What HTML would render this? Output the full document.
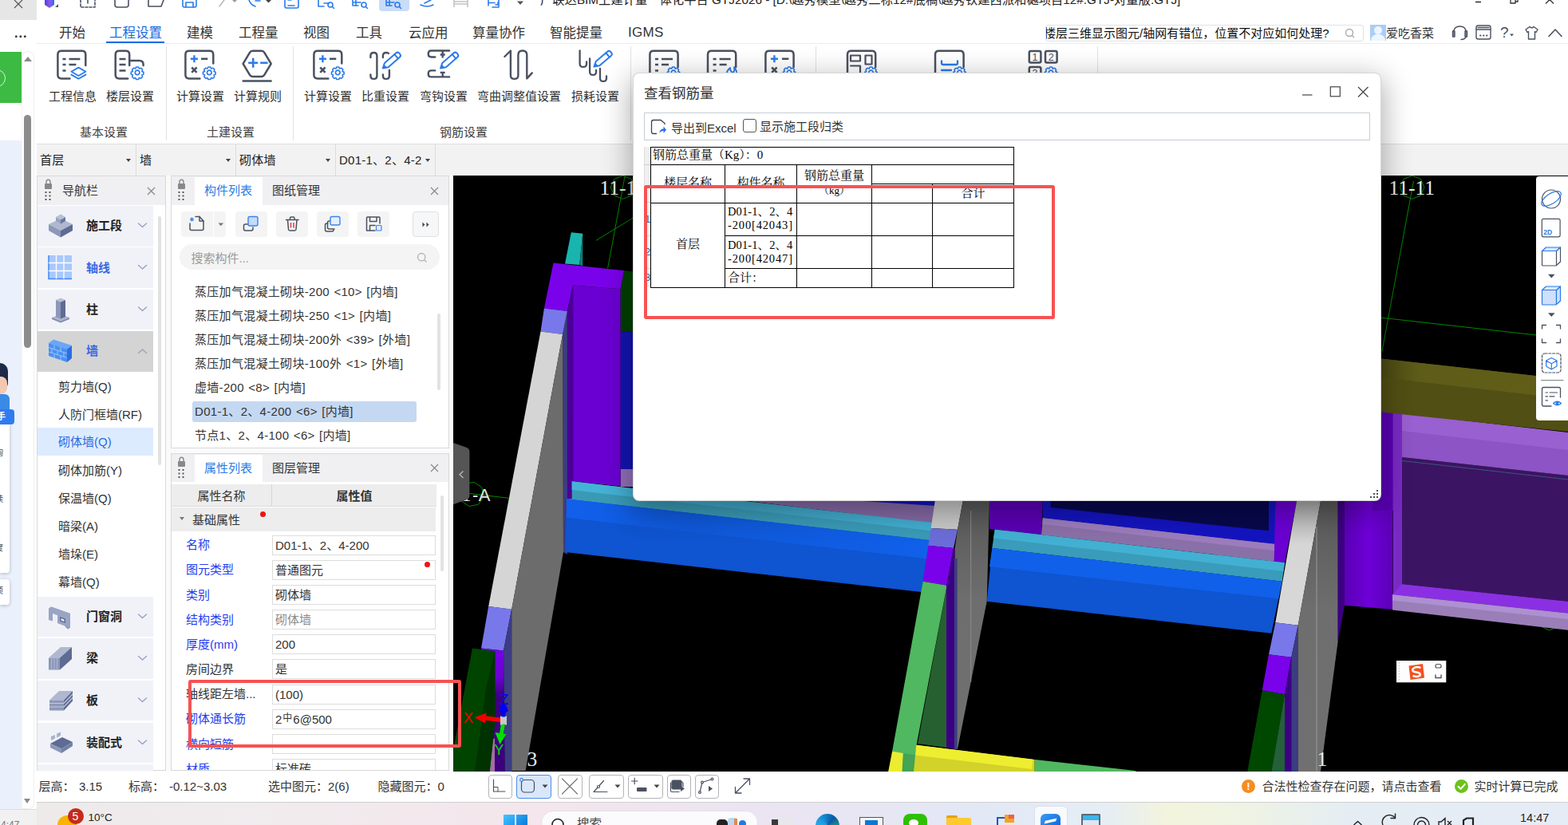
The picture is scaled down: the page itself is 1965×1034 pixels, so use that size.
<!DOCTYPE html>
<html lang="zh-CN">
<head>
<meta charset="utf-8">
<title>广联达BIM土建计量一体化平台 GTJ2026</title>
<style>
*{box-sizing:border-box;margin:0;padding:0}
html,body{width:1965px;height:1034px;overflow:hidden;background:#fff}
body{position:relative;font-family:"Liberation Sans","Noto Sans CJK SC",sans-serif;font-size:15px;color:#333;line-height:20px}
.a{position:absolute}
.t{position:absolute;white-space:nowrap;line-height:20px;height:20px}
.c{text-align:center}
.b{font-weight:bold}
.blue{color:#1a6be0}
svg{position:absolute;overflow:visible}
.ic{fill:none;stroke:#4a5160;stroke-linecap:round;stroke-linejoin:round}
.ib{fill:none;stroke:#2b7bea;stroke-linecap:round;stroke-linejoin:round}
.menu{font-size:16.5px;color:#333;top:31px}
.menu.blue{color:#1a6be0}
.rl{font-size:15px;color:#333;top:111px}
.gl{font-size:15px;color:#444;top:155.800px}
.vsep{position:absolute;width:1px;background:#e2e2e2;top:58px;height:118px}
.dd{position:absolute;top:181px;height:39px;border-right:1px solid #dcdcdc;font-size:15px;line-height:40px;letter-spacing:.25px;overflow:hidden;padding-left:4px;color:#222}
.dd i{position:absolute;right:6px;top:18px;border:3.5px solid transparent;border-top:4px solid #444;border-bottom:0}
.ph{position:absolute;background:#f0f0f2;height:36px}
.nav{position:absolute;left:47px;width:145px;background:#f0f2f8;font-weight:bold;font-size:15px;color:#222}
.nav span{position:absolute;left:61px;top:50%;margin-top:-10px;line-height:20px}
.nav svg.ch{left:123px;top:50%;margin-top:-5px}
.sub{position:absolute;left:47px;width:145px;height:35px;font-size:15px;line-height:35px;padding-left:26px;color:#333}
.li{position:absolute;left:244px;font-size:15px;color:#333;line-height:20px;white-space:nowrap;word-spacing:1px;letter-spacing:.3px}
.tb{position:absolute;top:265px;height:32px;background:#f4f4f4;border-radius:4px}
.pn{position:absolute;left:233px;font-size:15px;color:#1f3cf0;line-height:20px;white-space:nowrap}
.pv{position:absolute;left:341px;width:205px;height:25px;border:1px solid #dcdcdc;background:#fff;font-size:15px;line-height:23px;padding-left:3px;color:#333;white-space:nowrap;overflow:hidden}
.sb{position:absolute;top:970.500px;height:30px;border:1px solid #b4b4b4;border-radius:4px;background:#fff}
.st{position:absolute;top:976px;font-size:15px;line-height:20px;color:#333;white-space:nowrap}
.dlg{position:absolute;left:793px;top:91px;width:938px;height:537px;background:#fff;border-radius:8px;border:1px solid rgba(0,0,0,.16);box-shadow:0 10px 36px 3px rgba(0,0,0,.32)}
.tbl{position:absolute;font-family:"Liberation Serif","Noto Serif CJK SC",serif;font-size:15px;color:#000;line-height:20px;white-space:nowrap}
.hl{position:absolute;background:#000;height:1px}
.vl{position:absolute;background:#000;width:1px}
</style>
</head>
<body>
<!-- ===== neighbouring window strip on the far left ===== -->
<div class="a" style="left:0;top:0;width:46px;height:1034px;background:#fff"></div>
<div class="a" style="left:0;top:0;width:46px;height:25px;background:#e6e6e6"></div>
<svg style="left:17px;top:0" width="12" height="12"><path d="M1 0 L11 10 M11 0 L1 10" stroke="#555" stroke-width="1.2" fill="none"/></svg>
<div class="t" style="left:18px;top:31.500px;font-size:16px;color:#222;letter-spacing:1px;font-weight:bold">...</div>
<div class="a" style="left:0;top:65px;width:27px;height:64px;background:#3cba43"></div>
<div class="a" style="left:-15px;top:87px;width:22px;height:22px;border:1.5px solid #d8f0d8;border-radius:50%"></div>
<div class="a" style="left:0;top:176px;width:28px;height:838px;background:#eaf1fc"></div>
<div class="a" style="left:27px;top:64px;width:16px;height:950px;background:#fff;border:1px solid #efefef;border-left-color:#f4f4f4;border-radius:8px 8px 7px 0"></div>
<div class="a" style="left:30px;top:71px;border:5px solid transparent;border-bottom:6px solid #8a8a8a;border-top:0"></div>
<div class="a" style="left:30px;top:144px;width:9px;height:292px;background:#8c8c8c;border-radius:5px"></div>
<div class="a" style="left:30px;top:1001px;border:4.500px solid transparent;border-top:6px solid #8a8a8a;border-bottom:0"></div>
<!-- assistant card on neighbouring window -->
<div class="a" style="left:0;top:530px;width:12px;height:188px;background:#fff;border-radius:0 4px 4px 0;box-shadow:0 1px 4px rgba(0,0,0,.25)"></div>
<div class="a" style="left:0;top:726px;width:12px;height:32px;background:#fff;border-radius:0 4px 4px 0;box-shadow:0 1px 4px rgba(0,0,0,.25)"></div>
<div class="a" style="left:0;top:455px;width:10px;height:32px;background:#1c2a4a;border-radius:0 12px 8px 0"></div>
<div class="a" style="left:0;top:472px;width:9px;height:22px;background:#f4c8b0;border-radius:0 8px 8px 0"></div>
<div class="a" style="left:0;top:494px;width:12px;height:22px;background:#3a8ae8;border-radius:0 6px 0 0"></div>
<div class="a" style="left:0;top:513px;width:18px;height:19px;background:#2f7cf0;border-radius:0 4px 4px 0;color:#fff;font-size:11px;line-height:19px;overflow:hidden;text-indent:-4px;font-weight:bold">手</div>
<div class="t" style="left:-6px;top:558px;font-size:10px;color:#444">询</div>
<div class="t" style="left:-6px;top:616px;font-size:10px;color:#444">渎</div>
<div class="t" style="left:-6px;top:677px;font-size:10px;color:#444">度</div>
<div class="t" style="left:-6px;top:731px;font-size:10px;color:#444">项</div>

<!-- ===== main window: title bar ===== -->
<div class="a" style="left:46px;top:0;width:1919px;height:180px;background:#fff"></div>
<svg style="left:46px;top:0" width="660" height="16" viewBox="46 0 660 16">
 <defs><linearGradient id="lg" x1="0" x2="1"><stop offset="0" stop-color="#5a3ae0"/><stop offset=".55" stop-color="#8a5af0"/><stop offset="1" stop-color="#2b6cf0"/></linearGradient></defs>
 <path d="M56 0 H68 V6 L62 10 L56 6 Z" fill="url(#lg)"/><path d="M69 9 h4 v-4 z" fill="#555"/>
 <g class="ic" stroke-width="1.6">
  <path d="M101 0 V9 H119 V0" stroke-dasharray="3 2"/><path d="M110 0 V4"/>
  <path d="M144 0 V6 Q144 9 147 9 H158 Q161 9 161 6 V0"/>
  <path d="M186 0 V8 H202 L205 0"/>
  <path d="M229 0 V7 Q229 9 231 9 H244 Q246 9 246 7 V0" class="ib" stroke-width="1.6"/><path d="M233 9 V3 H242 V9" class="ib" stroke-width="1.6"/>
  <path d="M275 8 L281 0" stroke="#bbb"/><path d="M291 0 l3 3 l3 -3 z" fill="#999" stroke="none"/>
  <path d="M312 0 Q314 6 320 8" class="ib" stroke-width="1.6"/><path d="M320 1 h6" class="ib" stroke-width="1.6"/><path d="M333 0 l3.5 3.5 l3.5 -3.5 z" fill="#444" stroke="none"/>
  <path d="M357 0 V8 Q357 10 359 10 H372 Q374 10 374 8 V0" class="ib" stroke-width="1.6"/><path d="M361 0 L365 0 M361 7 H369" class="ib" stroke-width="1.6"/>
 </g>
 <rect x="475" y="-4" width="38" height="18" rx="4" fill="#c9dcf8"/>
 <g class="ib" stroke-width="1.6">
  <path d="M399 0 V8 H406 M406 4 H412"/><circle cx="414" cy="6" r="3"/><path d="M416.500 8.500 L418.500 10.500"/>
  <path d="M442 0 V7 H449 M446 0 V7 M442 3 H452"/><circle cx="456" cy="6" r="3"/><path d="M458.500 8.500 L460.500 10.500"/>
  <path d="M484 0 V7 H491 M488 0 V7 M484 3 H494"/><circle cx="498" cy="6" r="3"/><path d="M500.500 8.500 L502.500 10.500"/>
  <path d="M527 6 Q535 10 543 6 M532 4 L540 0"/>
  <path d="M612 0 V7 M612 3.500 H620 M625 0 V9 H617" /><path d="M621 6 h3 v-3" />
 </g>
 <g stroke="#c4c4c4" stroke-width="1.6" fill="none"><path d="M569 0 V9 M586 0 V9 M569 2 H586 M569 5 H586"/></g>
 <path d="M648 1.500 l4 4.500 l4 -4.500 z" fill="#555"/>
</svg>
<div class="t" style="left:677px;top:-10.500px;font-size:15.300px;color:#222;letter-spacing:0">广联达BIM土建计量一体化平台 GTJ2026 - [D:\越秀模型\越秀二标12#底稿\越秀铁建西派和樾项目12#.GTJ-对量版.GTJ]</div>
<svg style="left:1840px;top:0" width="120" height="8" viewBox="1840 0 120 8"><path d="M1849 2.500 H1856" stroke="#333" stroke-width="1.6"/><path d="M1893 0 V4 H1899 V0 M1899 2 H1902 V0" stroke="#333" stroke-width="1.3" fill="none"/><path d="M1937 4.500 L1942 -0.500 L1947 4.500" stroke="#333" stroke-width="1.3" fill="none"/></svg>

<!-- ===== menu tabs ===== -->
<div class="t menu" style="left:74px">开始</div>
<div class="t menu blue" style="left:137px">工程设置</div>
<div class="a" style="left:133px;top:52px;width:73px;height:3px;background:#1a6be0"></div>
<div class="t menu" style="left:234px">建模</div>
<div class="t menu" style="left:299px">工程量</div>
<div class="t menu" style="left:380px">视图</div>
<div class="t menu" style="left:446px">工具</div>
<div class="t menu" style="left:512px">云应用</div>
<div class="t menu" style="left:592px">算量协作</div>
<div class="t menu" style="left:689px">智能提量</div>
<div class="t menu" style="left:787px;font-size:17px;letter-spacing:.3px">IGMS</div>
<div class="a" style="left:46px;top:54px;width:1919px;height:1px;background:#ececec"></div>

<!-- search / account -->
<div class="a" style="left:1310px;top:31px;width:399px;height:21px;border:1px solid #e2e2e2;border-radius:3px;background:#fff;overflow:hidden">
 <div class="t" style="left:-3px;top:0;font-size:15px;color:#111;line-height:20px">楼层三维显示图元/轴网有错位，位置不对应如何处理?</div>
</div>
<svg style="left:1685px;top:35px" width="14" height="14"><circle cx="6" cy="6" r="4.500" fill="none" stroke="#aaa" stroke-width="1.4"/><path d="M9.500 9.500 L12 12" stroke="#aaa" stroke-width="1.4"/></svg>
<div class="a" style="left:1717px;top:31px;width:20px;height:20px;background:#a9cdf7;overflow:hidden"><div class="a" style="left:5px;top:2px;width:10px;height:10px;border-radius:50%;background:#eef5ff"></div><div class="a" style="left:1px;top:12px;width:18px;height:12px;border-radius:8px 8px 0 0;background:#eef5ff"></div></div>
<div class="t" style="left:1737px;top:32px;font-size:15px;color:#333">爱吃香菜</div>
<svg style="left:1815px;top:29px" width="150" height="26" viewBox="1815 29 150 26">
 <g class="ic" stroke-width="1.400">
  <path d="M1822 45 V40 Q1822 33 1829.500 33 Q1837 33 1837 40 V45"/><path d="M1820.500 39 h2.500 v7 h-2.500 z M1836 39 h2.500 v7 h-2.500 z"/><path d="M1837 46 Q1836 49.500 1831 49.500"/>
  <rect x="1850" y="32" width="18" height="17" rx="2.500"/><path d="M1850 37 H1868 M1852 34.500 H1866"/><path d="M1855 44.500 h.5 M1859 44.500 h.5 M1863 44.500 h.5" stroke-width="1.800"/>
  <path d="M1912 37 L1917 33.500 Q1919.500 36 1922 33.500 L1927 37 L1925 40.500 L1923.500 39.500 V49 H1915.500 V39.500 L1914 40.500 Z"/>
  <path d="M1941 45.500 L1949 37 L1957 45.500" stroke-width="1.600"/>
 </g>
 <path d="M1892 42.500 l2.500 3 l2.500 -3 z" fill="#4a5160"/>
</svg>
<div class="t" style="left:1880px;top:31px;font-size:19px;color:#4a5160">?</div>
<!-- ===== ribbon ===== -->
<div class="vsep" style="left:208px"></div>
<div class="vsep" style="left:367px"></div>
<div class="vsep" style="left:790px"></div>
<div class="vsep" style="left:1022px"></div>
<div class="vsep" style="left:1375px"></div>
<svg style="left:46px;top:56px" width="1400" height="50" viewBox="46 56 1400 50">
 <defs>
  <g id="pen" class="ib" stroke-width="2"><path d="M0.500 0 L6.500 -3.500 L25.500 -3.500 Q28.500 -3.500 28.500 0 Q28.500 3.500 25.500 3.500 L6.500 3.500 Z"/><path d="M23 -3.500 V3.500"/><path d="M0.500 0 L4.500 -2.400 L4.500 2.400 Z" fill="#2b7bea" stroke-width="1"/></g>
  <g id="gear" class="ib" stroke-width="1.700"><path d="M-1.500 -7.500 h3 l1 2.200 l2.400 -.8 l2.100 2.100 l-.8 2.400 l2.200 1 v3 l-2.200 1 l.8 2.400 l-2.100 2.100 l-2.400 -.8 l-1 2.200 h-3 l-1 -2.200 l-2.400 .8 l-2.100 -2.100 l.8 -2.400 l-2.200 -1 v-3 l2.200 -1 l-.8 -2.400 l2.100 -2.100 l2.400 .8 z" transform="scale(.93)"/><circle r="2.800"/></g>
 </defs>
 <!-- 工程信息 -->
 <g class="ic" stroke-width="2.500">
  <path d="M87.500 98.400 H77 Q72.400 98.400 72.400 94 V68.400 Q72.400 63.800 77 63.800 H102.700 Q107.300 63.800 107.300 68.400 V82"/>
  <path d="M78.500 73.900 H82.500 M86.500 73.900 H100.400 M78.500 80.900 H82.500 M86.500 80.900 H95.400 M78.500 88.600 H82.500" stroke-linecap="butt"/>
 </g>
 <g class="ib" stroke-width="1.900"><path d="M98.400 84.600 L107.400 89.800 L98.400 95 L89.400 89.800 Z"/><path d="M89.400 93.600 L98.400 98.800 L107.400 93.600"/></g>
 <!-- 楼层设置 -->
 <g class="ic" stroke-width="2.500">
  <path d="M160.200 98.400 H149.300 Q144.700 98.400 144.700 94 V68.400 Q144.700 63.800 149.300 63.800 H157.600 Q162.200 63.800 162.200 68.400 V82"/>
  <path d="M149.500 73.900 H157.500 M149.500 80.900 H157.500 M149.500 88.600 H157.500" stroke-linecap="butt"/>
  <path d="M162.200 75.900 H174.600 Q179.600 75.900 179.600 80.900 V82"/>
 </g>
 <use href="#gear" x="172.100" y="90.900"/>
 <!-- 计算设置 -->
 <g class="ic" stroke-width="2.500">
  <path d="M250.400 98.400 H237 Q232.400 98.400 232.400 94 V68.400 Q232.400 63.800 237 63.800 H262.700 Q267.300 63.800 267.300 68.400 V79.400"/>
  <path d="M252 73.700 H260.300 M240.200 84.500 L246.600 90.900 M246.600 84.500 L240.200 90.900" stroke-linecap="butt"/>
 </g>
 <path class="ib" stroke-width="2.400" stroke-linecap="butt" d="M238.900 73.700 H247.900 M243.400 69.200 V78.200" style="stroke-linecap:butt"/>
 <use href="#gear" x="262.300" y="90.900"/>
 <!-- 计算规则 -->
 <g class="ic" stroke-width="2.500">
  <path d="M304.600 79.800 L313 65.800 Q314.200 63.800 316.500 63.800 H327.800 Q330.100 63.800 331.300 65.800 L339.700 79.800 L331.300 93.900 Q330.100 95.900 327.800 95.900 H316.500 Q314.200 95.900 313 93.900 Z"/>
  <path d="M303.700 101.400 H340.600" stroke-linecap="butt"/>
 </g>
 <path class="ib" stroke-width="2.600" style="stroke-linecap:butt" d="M311.200 78.700 H323.200 M317.200 72.700 V84.700 M326.200 78.700 H335.600"/>
 <!-- 计算设置 (钢筋) -->
 <g class="ic" stroke-width="2.500">
  <path d="M411.400 98.400 H398 Q393.400 98.400 393.400 94 V68.400 Q393.400 63.800 398 63.800 H423.700 Q428.300 63.800 428.300 68.400 V79.400"/>
  <path d="M413 73.700 H421.300 M401.200 84.500 L407.600 90.900 M407.600 84.500 L401.200 90.900" stroke-linecap="butt"/>
 </g>
 <path class="ib" stroke-width="2.400" style="stroke-linecap:butt" d="M399.900 73.700 H408.900 M404.400 69.200 V78.200"/>
 <use href="#gear" x="423.300" y="90.900"/>
 <!-- 比重设置 -->
 <g class="ic" stroke-width="2.400">
  <path d="M464.400 72 V70 Q464.400 66 468.400 66 Q472.400 66 472.400 70 V94.900 Q472.400 98.900 468.400 98.900 Q464.400 98.900 464.400 94.900 V93.400"/>
  <path d="M479.900 72 V70 Q479.900 66 483.900 66 Q486 66 487 67 M487.900 88 V94.900 Q487.900 98.900 483.900 98.900 Q479.900 98.900 479.900 94.900 V93.400"/>
 </g>
 <use href="#pen" transform="translate(479.400 85.900) rotate(-41.300)"/>
 <!-- 弯钩设置 -->
 <g class="ic" stroke-width="2.400">
  <path d="M563.100 63.500 H540.700 Q536.700 63.500 536.700 67.500 Q536.700 71.500 540.700 71.500 H545.200"/>
  <path d="M554.700 63.500 V72.500 M551.700 68.500 H557.700" stroke-linecap="butt"/>
  <path d="M563.100 96.400 H540.700 Q536.700 96.400 536.700 92.400 Q536.700 88.400 540.700 88.400 H545.200"/>
  <path d="M554.700 90.400 V96.400 M551.700 90.900 H557.700" stroke-linecap="butt"/>
 </g>
 <use href="#pen" transform="translate(551.700 85.900) rotate(-41.300)"/>
 <!-- 弯曲调整值设置 -->
 <g class="ic" stroke-width="2.400"><path d="M632.400 71 L639.900 63.500 V94.400 Q639.900 98.900 644.650 98.900 Q649.400 98.900 649.400 94.400 V69 Q649.400 63.500 654.850 63.500 Q660.300 63.500 660.300 69 V98.400 L666.800 91.400"/></g>
 <!-- 损耗设置 -->
 <g class="ic" stroke-width="2.300">
  <path d="M726.600 63.500 V79.900 Q726.600 83.900 730.850 83.900 Q735.100 83.900 735.100 79.900 V77.400"/>
  <path d="M739.100 73.400 V89.900 Q739.100 93.900 743.100 93.900 Q747.100 93.900 747.100 89.900 V87.900"/>
  <path d="M752 85.900 V97.900 Q752 101.900 756 101.900 Q760 101.900 760 97.900 V95.400"/>
 </g>
 <use href="#pen" transform="translate(744.100 83.900) rotate(-40.600)"/>
 <!-- icons partly hidden by dialog -->
 <g class="ic" stroke-width="2.500">
  <path d="M814.400 100 V68.400 Q814.400 63.800 819 63.800 H845 Q849.600 63.800 849.600 68.400 V84"/>
  <path d="M821 73.900 H825 M829 73.900 H843 M821 80.900 H825 M829 80.900 H838 M821 88.600 H825" stroke-linecap="butt"/>
  <path d="M887 100 V68.400 Q887 63.800 891.600 63.800 H917.600 Q922.200 63.800 922.200 68.400 V84"/>
  <path d="M893.600 73.900 H897.600 M901.600 73.900 H915.600 M893.600 80.900 H897.600 M901.600 80.900 H910.600 M893.600 88.600 H897.600" stroke-linecap="butt"/>
  <path d="M959.400 100 V68.400 Q959.400 63.800 964 63.800 H990 Q994.600 63.800 994.600 68.400 V84"/>
  <path d="M980 73.700 H988.300 M967.200 84.500 L973.600 90.900 M973.600 84.500 L967.200 90.900" stroke-linecap="butt"/>
  <path d="M1062 100 V68.400 Q1062 63.800 1066.600 63.800 H1092.600 Q1097.200 63.800 1097.200 68.400 V84"/>
  <path d="M1066 69.500 H1078 V76.500 H1066 Z M1084.500 69.500 H1092.500 V80.500 H1084.500 Z M1066 82.500 H1078 V100" stroke-width="2.200"/>
  <path d="M1172 100 V68.400 Q1172 63.800 1176.600 63.800 H1203 Q1207.600 63.800 1207.600 68.400 V84"/>
  <rect x="1289.800" y="64" width="14.600" height="14.400" rx="2"/><rect x="1310" y="64" width="14.600" height="14.400" rx="2"/><path d="M1289.800 100 V86 Q1289.800 84 1291.800 84 H1302.400 Q1304.400 84 1304.400 86 V100"/>
 </g>
 <path class="ib" stroke-width="2.400" style="stroke-linecap:butt" d="M965.900 73.700 H974.900 M970.400 69.200 V78.200"/>
 <path class="ib" stroke-width="2.300" d="M1180 76.500 V79 Q1180 81 1182 81 H1198 Q1200 81 1200 79 V76.500 M1180 88 H1192"/>
 <use href="#gear" x="844" y="91"/><use href="#gear" x="989" y="91"/><use href="#gear" x="1091.500" y="91"/><use href="#gear" x="1202.500" y="91"/><use href="#gear" x="1317" y="91"/>
 <path class="ib" stroke-width="1.800" d="M910 98 Q909 90 915 85 Q915 90 919 91 Q921 88 920 84 Q925 90 923 98"/>
</svg>
<div class="t" style="left:1293.500px;top:62px;font-size:12.500px;color:#4a5160">1</div>
<div class="t" style="left:1313.800px;top:62px;font-size:12.500px;color:#4a5160">2</div>
<div class="t" style="left:1293.500px;top:82px;font-size:12.500px;color:#4a5160">3</div>
<div class="t rl" style="left:61px">工程信息</div>
<div class="t rl" style="left:133px">楼层设置</div>
<div class="t rl" style="left:221px">计算设置</div>
<div class="t rl" style="left:293px">计算规则</div>
<div class="t rl" style="left:381px">计算设置</div>
<div class="t rl" style="left:453px">比重设置</div>
<div class="t rl" style="left:526px">弯钩设置</div>
<div class="t rl" style="left:598px">弯曲调整值设置</div>
<div class="t rl" style="left:716px">损耗设置</div>
<div class="t gl" style="left:100px">基本设置</div>
<div class="t gl" style="left:259px">土建设置</div>
<div class="t gl" style="left:551px">钢筋设置</div>

<!-- ===== selector row ===== -->
<div class="a" style="left:46px;top:180px;width:1919px;height:40px;background:#f2f2f2;border-top:1px solid #dedede"></div>
<div class="dd" style="left:46px;width:125px">首层<i></i></div>
<div class="dd" style="left:171px;width:125px">墙<i></i></div>
<div class="dd" style="left:296px;width:125px">砌体墙<i></i></div>
<div class="dd" style="left:421px;width:125px">D01-1、2、4-2<i></i></div>
<!-- ===== docked panels background ===== -->
<div class="a" style="left:46px;top:220px;width:522px;height:747px;background:#fafafa"></div>
<!-- navigation panel -->
<div class="a" style="left:46px;top:220px;width:162px;height:746px;background:#fff;border:1px solid #d9d9d9"></div>
<div class="ph" style="left:47px;top:221px;width:160px"></div>
<svg style="left:54px;top:224px" width="14" height="30" viewBox="0 0 14 30"><rect x="2" y="6" width="9" height="7" rx="1" fill="#888"/><path d="M4 6 V4 Q4 1.200 6.500 1.200 Q9 1.200 9 4 V6" fill="none" stroke="#888" stroke-width="1.400"/><g fill="#555"><rect x="2.500" y="16" width="2" height="2"/><rect x="7.500" y="16" width="2" height="2"/><rect x="2.500" y="20.500" width="2" height="2"/><rect x="7.500" y="20.500" width="2" height="2"/><rect x="2.500" y="25" width="2" height="2"/><rect x="7.500" y="25" width="2" height="2"/></g></svg>
<div class="t" style="left:78px;top:229px;font-size:15px;color:#333">导航栏</div>
<svg style="left:184px;top:234px" width="11" height="11"><path d="M1 1 L10 10 M10 1 L1 10" stroke="#888" stroke-width="1.200" fill="none"/></svg>
<div class="a" style="left:198px;top:271px;width:4px;height:312px;background:#e2e2e2;border-radius:2px"></div>

<div class="nav" style="top:258px;height:50.500px"><span>施工段</span></div>
<div class="nav" style="top:310.300px;height:50.500px"><span style="color:#3a6ae0">轴线</span></div>
<div class="nav" style="top:362.600px;height:50.500px"><span>柱</span></div>
<div class="nav" style="top:415px;height:50.500px;background:#d4d4d4"><span style="color:#3a6ae0">墙</span></div>
<div class="sub" style="top:467px">剪力墙(Q)</div>
<div class="sub" style="top:502px">人防门框墙(RF)</div>
<div class="sub" style="top:535.800px;background:#ddebff;color:#2a6be0">砌体墙(Q)</div>
<div class="sub" style="top:572px">砌体加筋(Y)</div>
<div class="sub" style="top:607px">保温墙(Q)</div>
<div class="sub" style="top:642px">暗梁(A)</div>
<div class="sub" style="top:677px">墙垛(E)</div>
<div class="sub" style="top:711.500px">幕墙(Q)</div>
<div class="nav" style="top:747.600px;height:50.500px"><span>门窗洞</span></div>
<div class="nav" style="top:800.200px;height:50.500px"><span>梁</span></div>
<div class="nav" style="top:852.500px;height:50.500px"><span>板</span></div>
<div class="nav" style="top:905.500px;height:50.500px"><span>装配式</span></div>
<div class="nav" style="top:957.500px;height:8px"></div>
<!-- nav icons + chevrons -->
<svg style="left:46px;top:220px" width="162" height="746" viewBox="46 220 162 746">
 <g fill="none" stroke="#98a2c0" stroke-width="1.400" stroke-linecap="round" stroke-linejoin="round">
  <path d="M173.500 280 L178.500 284.500 L183.500 280"/><path d="M173.500 332.500 L178.500 337 L183.500 332.500"/><path d="M173.500 385 L178.500 389.500 L183.500 385"/>
  <path d="M173.500 442.500 L178.500 438 L183.500 442.500"/>
  <path d="M173.500 770 L178.500 774.500 L183.500 770"/><path d="M173.500 822.500 L178.500 827 L183.500 822.500"/><path d="M173.500 875 L178.500 879.500 L183.500 875"/><path d="M173.500 928 L178.500 932.500 L183.500 928"/>
 </g>
 <!-- 施工段 -->
 <path d="M61 281 L76 274 L91 281 L76 289 Z" fill="#b0b8d0"/><path d="M61 281 V289 L76 297.500 V289 Z" fill="#8c98b8"/><path d="M91 281 V289 L76 297.500 V289 Z" fill="#5e6c94"/>
 <path d="M70 272 L76 268.500 L82 272 L76 275.500 Z" fill="#b8c0d6"/><path d="M70 272 V277 L76 280.500 V275.500 Z" fill="#9aa4c0"/><path d="M82 272 V277 L76 280.500 V275.500 Z" fill="#6a789e"/>
 <!-- 轴线 -->
 <rect x="61" y="320" width="29" height="29.500" fill="#a9c8fc"/><path d="M61 320 V349.500 H90" fill="none" stroke="#3f86f6" stroke-width="1.500"/>
 <path d="M70.500 320 V349.500 M80 320 V349.500 M61 329.500 H90 M61 339.500 H90" stroke="#fff" stroke-width="1.300"/>
 <!-- 柱 -->
 <path d="M65 398 L76 394 L87 398 L76 402.500 Z" fill="#aab2cc"/><path d="M65 398 V400 L76 404.500 L87 400 V398 L76 402.500 Z" fill="#7e8ab0"/>
 <path d="M70 376 L76 373.500 L82 376 L76 378.500 Z" fill="#b8c0d6"/><path d="M70 376 V397 L76 399.500 V378.500 Z" fill="#8c98b8"/><path d="M82 376 V397 L76 399.500 V378.500 Z" fill="#5e6c94"/>
 <!-- 墙 -->
 <path d="M61 430 L67 425.500 L90 433 L84 437.500 Z" fill="#6aa6f8"/><path d="M61 430 V446 L84 454 V437.500 Z" fill="#4a90f4"/><path d="M90 433 V449 L84 454 V437.500 Z" fill="#2a6ee0"/>
 <path d="M61 435.500 L84 443 M61 441 L84 448.500 M68 432.500 V437.500 M76 435 V440.500 M65 437 V442 M72 439.500 V444.500 M80 442 V447 M68 443.500 V448.500 M76 446 V451" stroke="#9cc4fb" stroke-width="1" fill="none"/>
 <!-- 门窗洞 -->
 <path d="M61 763 L64 760.500 L88 769 V786.500 L85 788.500 Z" fill="#7e8ab0"/><path d="M61 763 V777 L66 778.500 V769 L72 771 V781 L85 786 V788.500 L88 786.500 V769 L64 760.500 Z" fill="#9aa4c4"/><path d="M66 769 L72 771 V781 L66 778.500 Z" fill="#eef0f6"/><path d="M75 773 L82 775.500 V781 L75 778.500 Z" fill="#5e6c94"/><path d="M76.500 775 L80.500 776.500 V779 L76.500 777.500 Z" fill="#eef0f6"/>
 <!-- 梁 -->
 <path d="M61 824.500 L76 811 H90 L75 824.500 Z" fill="#b0b8d0"/><path d="M61 824.500 H75 V839.500 H61 Z" fill="#8c98b8"/><path d="M75 824.500 L90 811 V826 L75 839.500 Z" fill="#5e6c94"/><path d="M64.500 824.500 V839.500 M68 824.500 V839.500 M71.500 824.500 V839.500" stroke="#aab4d0" stroke-width="1.200"/>
 <!-- 板 -->
 <path d="M62 877.500 L74 866 H91 L80 877.500 Z" fill="#b0b8d0"/><path d="M62 877.500 H80 V890.500 H62 Z" fill="#8c98b8"/><path d="M80 877.500 L91 866 V878.500 L80 890.500 Z" fill="#5e6c94"/><path d="M62 881.500 H80 L91 870 M62 886 H80 L91 874.500" stroke="#c4cade" stroke-width="1.200" fill="none"/>
 <!-- 装配式 -->
 <path d="M63 932 L78 924 L91 930 L77 938.500 Z" fill="#5e6c94"/><path d="M63 932 V937 L77 944 V938.500 Z" fill="#8c98b8"/><path d="M91 930 V935 L77 944 V938.500 Z" fill="#7280a6"/><path d="M64 923 L69 921 V925.500 L64 928 Z M71 919.500 L76 917.500 V922 L71 924.500 Z" fill="#aab2cc"/>
</svg>

<!-- ===== component list panel ===== -->
<div class="a" style="left:214px;top:220px;width:349px;height:342px;background:#fff;border:1px solid #d9d9d9"></div>
<div class="ph" style="left:215px;top:221px;width:347px"></div>
<div class="a" style="left:243.500px;top:222px;width:85px;height:35px;background:#fff"></div>
<svg style="left:221px;top:224px" width="14" height="30" viewBox="0 0 14 30"><rect x="2" y="6" width="9" height="7" rx="1" fill="#888"/><path d="M4 6 V4 Q4 1.200 6.500 1.200 Q9 1.200 9 4 V6" fill="none" stroke="#888" stroke-width="1.400"/><g fill="#555"><rect x="2.500" y="16" width="2" height="2"/><rect x="7.500" y="16" width="2" height="2"/><rect x="2.500" y="20.500" width="2" height="2"/><rect x="7.500" y="20.500" width="2" height="2"/><rect x="2.500" y="25" width="2" height="2"/><rect x="7.500" y="25" width="2" height="2"/></g></svg>
<div class="t" style="left:256px;top:229px;color:#2a7be4">构件列表</div>
<div class="t" style="left:341px;top:229px;color:#333">图纸管理</div>
<svg style="left:539px;top:234px" width="11" height="11"><path d="M1 1 L10 10 M10 1 L1 10" stroke="#888" stroke-width="1.200" fill="none"/></svg>
<div class="tb" style="left:227px;width:56px"></div><div class="a" style="left:267px;top:265px;width:1px;height:32px;background:#fff"></div>
<div class="tb" style="left:294.500px;width:40px"></div>
<div class="tb" style="left:346px;width:40px"></div>
<div class="tb" style="left:397px;width:40px"></div>
<div class="tb" style="left:448px;width:40px"></div>
<div class="tb" style="left:517px;width:33px;background:#f6f7f8;border:1px solid #e0e0e0"></div>
<svg style="left:214px;top:260px" width="349" height="44" viewBox="214 260 349 44">
 <g class="ic" stroke-width="1.500">
  <path d="M238 280 V286.500 Q238 288.500 240 288.500 H253 Q255 288.500 255 286.500 V277 L250 271.500 H245"/><path d="M250 271.500 V277 H255"/>
  <path d="M313 281 H307.500 Q305.500 281 305.500 283 V287 Q305.500 289 307.500 289 H315 Q317 289 317 287 V285"/>
  <path d="M360.500 275.500 H372 L371 287.500 Q370.800 289 369.300 289 H363.200 Q361.700 289 361.500 287.500 Z M358.500 275.500 H374 M363.500 275.500 V273.500 Q363.500 272 365 272 H367.500 Q369 272 369 273.500 V275.500"/>
  <path d="M411 280 H409.500 Q407.500 280 407.500 282 V288 Q407.500 290 409.500 290 H416 Q418 290 418 288 M414 277 H412.500 Q410.500 277 410.500 279 V285 Q410.500 287 412.500 287 H419"/>
  <path d="M459.500 289 V273 Q459.500 272 460.500 272 H475 Q476 272 476 273 V280 M459.500 289 H470 M463.500 272 V277.500 H472 V272 M463.500 289 V282.500 H470"/>
 </g>
 <path d="M238.500 273 L242.500 277 M242.500 273 L238.500 277 M240.500 272.500 V277.500 M238 275 H243" stroke="#2b7bea" stroke-width="1" fill="none"/>
 <rect x="311" y="271.500" width="12" height="11.500" rx="2" fill="#c4dbfb" stroke="#3b84ee" stroke-width="1.400"/>
 <rect x="414" y="271.500" width="12" height="10.500" rx="2" fill="#e4eefd" stroke="#3b84ee" stroke-width="1.400"/>
 <path d="M364.500 279 V285.500 M368 279 V285.500" stroke="#e83a3a" stroke-width="1.500" fill="none"/>
 <rect x="471.500" y="282.500" width="6.500" height="6.500" rx="1" fill="#e4eefd" stroke="#3b84ee" stroke-width="1.200"/>
 <path d="M273.500 279.500 l3.300 3.800 l3.300 -3.800 z" fill="#777"/>
 <path d="M529.500 278.500 l3 3 l-3 3 z M534.500 278.500 l3 3 l-3 3 z" fill="#444"/>
</svg>
<div class="a" style="left:225px;top:306px;width:326px;height:32px;background:#f4f4f4;border-radius:16px"></div>
<div class="t" style="left:239.500px;top:314px;color:#9a9a9a">搜索构件...</div>
<svg style="left:522px;top:316px" width="14" height="14"><circle cx="6.200" cy="6.200" r="4.700" fill="none" stroke="#b4b4b4" stroke-width="1.400"/><path d="M9.700 9.700 L12.500 12.500" stroke="#b4b4b4" stroke-width="1.400"/></svg>
<div class="a" style="left:241px;top:502.500px;width:281px;height:26px;background:#c4d8f1;border-radius:3px"></div>
<div class="li" style="top:356px">蒸压加气混凝土砌块-200 &lt;10&gt; [内墙]</div>
<div class="li" style="top:386px">蒸压加气混凝土砌块-250 &lt;1&gt; [内墙]</div>
<div class="li" style="top:416px">蒸压加气混凝土砌块-200外 &lt;39&gt; [外墙]</div>
<div class="li" style="top:446px">蒸压加气混凝土砌块-100外 &lt;1&gt; [外墙]</div>
<div class="li" style="top:476px">虚墙-200 &lt;8&gt; [内墙]</div>
<div class="li" style="top:506px">D01-1、2、4-200 &lt;6&gt; [内墙]</div>
<div class="li" style="top:536px">节点1、2、4-100 &lt;6&gt; [内墙]</div>
<div class="a" style="left:547.500px;top:393px;width:4px;height:96px;background:#e2e2e2;border-radius:2px"></div>

<!-- ===== property panel ===== -->
<div class="a" style="left:214px;top:568px;width:349px;height:398px;background:#fff;border:1px solid #d9d9d9;overflow:hidden"></div>
<div class="ph" style="left:215px;top:569px;width:347px;height:35px"></div>
<div class="a" style="left:243.500px;top:570px;width:85px;height:34px;background:#fff"></div>
<svg style="left:221px;top:572px" width="14" height="30" viewBox="0 0 14 30"><rect x="2" y="6" width="9" height="7" rx="1" fill="#888"/><path d="M4 6 V4 Q4 1.200 6.500 1.200 Q9 1.200 9 4 V6" fill="none" stroke="#888" stroke-width="1.400"/><g fill="#555"><rect x="2.500" y="16" width="2" height="2"/><rect x="7.500" y="16" width="2" height="2"/><rect x="2.500" y="20.500" width="2" height="2"/><rect x="7.500" y="20.500" width="2" height="2"/><rect x="2.500" y="25" width="2" height="2"/><rect x="7.500" y="25" width="2" height="2"/></g></svg>
<div class="t" style="left:256px;top:576.500px;color:#2a7be4">属性列表</div>
<div class="t" style="left:341px;top:576.500px;color:#333">图层管理</div>
<svg style="left:539px;top:581px" width="11" height="11"><path d="M1 1 L10 10 M10 1 L1 10" stroke="#888" stroke-width="1.200" fill="none"/></svg>
<div class="a" style="left:215px;top:606.500px;width:332px;height:28.500px;background:#ededed;border-bottom:1px solid #dadada"></div>
<div class="a" style="left:340px;top:606.500px;width:1px;height:28.500px;background:#d6d6d6"></div>
<div class="t c" style="left:215px;width:125px;top:612px;color:#333">属性名称</div>
<div class="t c b" style="left:341px;width:206px;top:612px;color:#333">属性值</div>
<div class="a" style="left:215px;top:636px;width:331px;height:29.500px;background:#ededed"></div>
<div class="a" style="left:225px;top:648px;border:3.500px solid transparent;border-top:4px solid #777;border-bottom:0"></div>
<div class="t" style="left:241px;top:641.500px;color:#333">基础属性</div>
<div class="a" style="left:326px;top:641px;width:7px;height:7px;border-radius:50%;background:#f01414"></div>
<div class="pn" style="top:673.300px">名称</div><div class="pv" style="top:670.600px">D01-1、2、4-200</div>
<div class="pn" style="top:704.400px">图元类型</div><div class="pv" style="top:701.700px">普通图元</div>
<div class="a" style="left:532px;top:704px;width:7px;height:7px;border-radius:50%;background:#f01414"></div>
<div class="pn" style="top:735.500px">类别</div><div class="pv" style="top:732.800px">砌体墙</div>
<div class="pn" style="top:766.600px">结构类别</div><div class="pv" style="top:764px;color:#8c8c8c">砌体墙</div>
<div class="pn" style="top:797.700px">厚度(mm)</div><div class="pv" style="top:795.200px">200</div>
<div class="pn" style="top:828.800px;color:#333">房间边界</div><div class="pv" style="top:826.300px">是</div>
<div class="pn" style="top:860.300px;color:#333">轴线距左墙...</div><div class="pv" style="top:857.500px">(100)</div>
<div class="pn" style="top:891px">砌体通长筋</div><div class="pv" style="top:888.500px">2<span style="font-size:12px;position:relative;top:-3px;margin:0 1px">中</span>6@500</div>
<div class="pn" style="top:922.500px">横向短筋</div><div class="pv" style="top:920px"></div>
<div class="a" style="left:215px;top:951px;width:347px;height:14px;overflow:hidden"><div class="pn" style="left:18px;top:2.500px">材质</div><div class="pv" style="left:126px;top:0">标准砖</div></div>
<div class="a" style="left:552px;top:621px;width:4px;height:95px;background:#e2e2e2;border-radius:2px"></div>
<!-- ===== 3D viewport ===== -->
<svg style="left:568px;top:220px;overflow:hidden" width="1397" height="747" viewBox="568 220 1397 747">
 <defs>
  <linearGradient id="gb" x1="0" x2="1"><stop offset="0" stop-color="#1160ec"/><stop offset=".35" stop-color="#0f58d8"/><stop offset="1" stop-color="#1160ea"/></linearGradient>
  <linearGradient id="gt" x1="0" x2="1"><stop offset="0" stop-color="#45b4d8"/><stop offset=".5" stop-color="#3fa6c6"/><stop offset="1" stop-color="#43aed0"/></linearGradient>
  <linearGradient id="gg" x1="0" y1="0" x2="0" y2="1"><stop offset="0" stop-color="#585858"/><stop offset=".4" stop-color="#6e6e6e"/><stop offset="1" stop-color="#707070"/></linearGradient>
  <linearGradient id="gl" x1="0" y1="0" x2="0" y2="1"><stop offset="0" stop-color="#a8a8a8"/><stop offset=".35" stop-color="#d6d6d6"/><stop offset="1" stop-color="#d8d8d8"/></linearGradient>
  <linearGradient id="gp" x1="0" x2="1"><stop offset="0" stop-color="#5a00b4"/><stop offset=".5" stop-color="#6e00d8"/><stop offset="1" stop-color="#5c00b8"/></linearGradient>
  <linearGradient id="gv" gradientUnits="userSpaceOnUse" x1="0" y1="814" x2="0" y2="872"><stop offset="0" stop-color="#7400e4"/><stop offset=".6" stop-color="#6a00d0"/><stop offset="1" stop-color="#3c007c"/></linearGradient>
  <linearGradient id="go" x1="0" x2="1"><stop offset="0" stop-color="#4c4a14"/><stop offset=".2" stop-color="#5e5c18"/><stop offset="1" stop-color="#605e18"/></linearGradient>
 </defs>
 <rect x="568" y="220" width="1397" height="747" fill="#000"/>
 <!-- grid lines -->
 <g fill="none" stroke="#008a00" stroke-width="1">
  <path d="M795.7 234.8 L791.2 245.1 L780.5 249.4 L769.8 245.1 L765.3 234.8 L769.8 224.5 L780.5 220.2 L791.2 224.5 Z"/><path d="M783.100 220.600 L761.600 336.200"/><path d="M747 301.400 L795 272"/>
  <path d="M1784.9 234.8 L1780.4 245.1 L1769.7 249.4 L1759.0 245.1 L1754.5 234.8 L1759.0 224.5 L1769.7 220.2 L1780.4 224.5 Z"/><path d="M1771.500 226.800 L1732 440"/><path d="M1725 397.500 L1930 420.500"/>
  <path d="M606.1 622.6 L599.4 632.3 L587.8 634.5 L578.1 627.8 L575.9 616.2 L582.6 606.5 L594.2 604.3 L603.9 611.0 Z"/><path d="M588.500 618.500 L637.400 624.300"/>
  <path d="M1933 786 L1942 790 L1950 786"/>
 </g>
 <!-- left column group -->
 <path d="M715.800 291.200 L730.300 292.700 L726.200 331.900 L708 330.400 Z" fill="#1ab4ae"/>
 <path d="M730.300 292.700 L730.300 333.300 L726.200 331.900 Z" fill="#127a76"/>
 <path d="M782 339.100 L793 340.300 V416.600 L777.600 415.400 V362 Z" fill="#004000"/>
 <path d="M777.600 415.400 L793 416.600 V589 H777.600 Z" fill="#1414b4"/>
 <path d="M777.600 588 H793 V610 H777.600 Z" fill="#9070b8"/>
 <path d="M693.500 329.500 L782 339.100 L777.600 362.300 L718.100 357.400 L710.900 389.900 L681.900 386.400 Z" fill="#7a02ea"/>
 <path d="M718.100 357.400 L777.600 362.300 V609.500 L718.100 603.300 Z" fill="#6a00d2"/>
 <path d="M718.100 357.400 V626 H711 L710.900 389.900 Z" fill="#4a0094"/>
 <path d="M710.900 389.900 L711 695 L706 692 L705.100 418.900 Z" fill="#3c3c82"/>
 <path d="M681.900 386.400 L710.900 389.900 L705.100 418.900 L677.500 415.400 Z" fill="#7878ea"/>
 <path d="M677.500 415.400 L705.100 418.900 L641.200 763.700 L612.200 760 Z" fill="#d5d5d5"/>
 <path d="M705.100 418.900 L706 692 L658.600 966 H641.200 V763.700 Z" fill="#6c6c6c"/>
 <path d="M612.200 760 L641.200 763.500 L631 815.500 L603 812.600 Z" fill="#7878ea"/>
 <path d="M631 815.500 L641.200 763.500 V967 H632.500 Z" fill="#3c3c82"/>
 <path d="M603 812.600 L631 815.500 L632.500 967 H613 Z" fill="url(#gv)"/>
 <path d="M613.700 930 L620 925 V967 H612 Z" fill="#a070a0"/>
 <path d="M591.900 812.600 L620.300 816 V905 L613.700 967 H568 V940 Z" fill="#004400"/>
 <path d="M620.300 816 V905 L613.700 967 H595 L609.400 860 Z" fill="#003200"/>
 <!-- beam 1 (left bay) -->
 <path d="M930 627 L1173.300 627 L1170 656 Z" fill="#8468a4"/>
 <path d="M716.700 603.300 L1170 655.300 L1165 677.500 L710 625.800 L716.700 625 Z" fill="#3a9ab6"/>
 <path d="M716.700 603.300 L1170 655.300 L1168 665.300 L716.700 614 Z" fill="url(#gt)"/>
 <path d="M1080 628 H1173.300 L1172.500 634 Z" fill="#1414c0"/>
 <path d="M710 625.300 L1165 677 L1155 742 L708.300 692 Z" fill="#0f54d0"/>
 <path d="M710 625.300 L1165 677 L1161.700 700.300 L710 648.700 Z" fill="url(#gb)"/>
 <!-- column 2 -->
 <path d="M1171.700 628 L1206.700 628 L1200 663.700 L1166.700 662 Z" fill="#c8c8c8"/>
 <path d="M1166.700 662 L1200 663.700 L1195 687 L1163.300 683.700 Z" fill="#6c6cd8"/>
 <path d="M1163.300 683.700 L1195 687 L1186.700 733.700 L1156.700 728.700 Z" fill="#7a02ea"/>
 <path d="M1186.700 733.700 L1186 937 L1150 932 Z" fill="#266030"/>
 <path d="M1156.700 728.700 L1186.700 733.700 L1148.300 935 L1146 967 H1113.500 Z" fill="#50b860"/>
 <path d="M1131.700 944 L1147.500 946.300 L1146 967 H1130 Z" fill="#42a454"/>
 <path d="M1195 687 L1196.700 687 V938.700 L1186 937 V733.700 Z" fill="#3c0082"/>
 <path d="M1206.700 628 H1240 L1236.700 753.700 L1200 938.700 H1196.700 V687 L1200 663.700 Z" fill="url(#gg)"/>
 <path d="M1216.700 640 V855" stroke="#8c8c8c" stroke-width="1" fill="none"/>
 <path d="M1195.800 700 H1199.600 V938.700 H1195.800 Z" fill="#3c3c82"/>
 <path d="M1118.300 941.700 L1131.700 944 L1130.500 967 H1113.200 Z" fill="#ecec30"/>
 <path d="M1148.300 933.700 L1296.700 952 V967 H1145 Z" fill="#d2d22a"/>
 <path d="M1148.300 933.700 L1294.500 951.700 L1293 964 L1147.300 946.500 Z" fill="#eeee30"/>
 <path d="M1296.700 952 L1423.300 966 V967 H1296.700 Z" fill="#50b860"/>
 <!-- bay 2 back wall, window, beams -->
 <path d="M1240 628 H1306.700 L1305 670.300 L1240 663 Z" fill="#5a00b4"/>
 <path d="M1306.700 628 H1598.300 V682 L1306.700 649.300 Z" fill="#1414c0"/>
 <path d="M1316.700 628 H1590 V665.300 L1316.700 636 Z" fill="#08084c"/>
 <path d="M1306.700 649.300 L1598.300 682 L1596.700 703.700 L1305 670.300 Z" fill="#8a70a8"/>
 <path d="M1306.700 649.300 L1598.300 682 L1597.800 690 L1306.400 657 Z" fill="#9c7cbc"/>
 <path d="M1598.300 628 H1625 L1610 705.300 L1596.700 703.700 Z" fill="#6a00d2"/>
 <path d="M1246.700 663.700 L1610 705.300 L1606.700 728.700 L1243.300 687 Z" fill="#3a9cba"/>
 <path d="M1246.700 663.700 L1610 705.300 L1608.400 716 L1245 674.500 Z" fill="#42b0d2"/>
 <path d="M1243.300 687 L1606.700 728.700 L1593.300 793.700 L1236.700 753.700 Z" fill="#0f54d0"/>
 <path d="M1243.300 687 L1606.700 728.700 L1602.300 750.300 L1240 710.300 Z" fill="#1160ea"/>
 <!-- column 3 -->
 <path d="M1625 628 H1655 L1626.700 783.700 L1598.300 780.300 Z" fill="url(#gl)"/>
 <path d="M1598.300 780.300 L1626.700 783.700 L1618.300 823.700 L1590 820.300 Z" fill="#7878ea"/>
 <path d="M1590 820.300 L1618.300 823.700 L1610 870.300 L1581.700 865.300 Z" fill="#7a02ea"/>
 <path d="M1581.700 865.300 L1610 870.300 L1593.300 967 H1563.300 Z" fill="#004800"/>
 <path d="M1610 870.300 V967 H1593.300 Z" fill="#24603a"/>
 <path d="M1618.300 823.700 V967 H1610 V870.300 Z" fill="#3c0082"/>
 <path d="M1626.700 783.700 V967 H1618.300 V823.700 Z" fill="#3c3c82"/>
 <path d="M1655 628 H1676.700 V803.700 L1655 967 H1626.700 V783.700 Z" fill="url(#gg)"/>
 <path d="M1650 660 V967" stroke="#9a9a9a" stroke-width="1" fill="none"/>
 <path d="M1676.700 628 H1685 V758.700 L1676.700 803.700 Z" fill="#3c0082"/>
 <!-- right bay -->
 <path d="M1685 628 H1745 V763.700 L1685 758.700 Z" fill="url(#gp)"/>
 <path d="M1720 516.600 H1746 V640 H1720 Z" fill="#5a00b4"/>
 <path d="M1745.600 517 H1757 V746.500 L1745.600 745.300 Z" fill="#7a2ac4"/>
 <path d="M1757 573 L1965 596 V753.700 L1757 732 Z" fill="#3c1464"/>
 <path d="M1757 577.500 L1965 601" stroke="#3a6a7a" stroke-width=".8" fill="none"/>
 <path d="M1757 530 L1965 554 V596 L1757 573 Z" fill="#8c54c4"/>
 <path d="M1757 518 L1965 542 V564 L1757 540 Z" fill="#9860d0"/>
 <path d="M1756.700 732 L1965 753.700 V768.700 L1745 745.300 Z" fill="#8a30e2"/>
 <path d="M1745 745.300 L1965 768.700 V789.800 L1745 764.500 Z" fill="#9a7eb8"/>
 <path d="M1745 745.300 L1965 768.700 V776 L1745 752.500 Z" fill="#ae90d2"/>
 <path d="M1731 449.600 L1965 475.400 V541 L1731 516.600 Z" fill="#524f14"/>
 <path d="M1731 449.600 L1965 475.400 V500 L1731 473 Z" fill="url(#go)"/>
 <!-- labels -->
 <g fill="#ececec" font-family="'Liberation Serif',serif" font-size="25.500px">
  <text x="751.500" y="243.500">11-1</text>
  <text x="1740.500" y="243.500">11-11</text>
  <text x="592" y="627.800" font-size="22px" font-family="'Liberation Sans',sans-serif" fill="#e4e4e4" style="letter-spacing:.5px">-A</text><text x="578.500" y="627.800" font-size="24px">1</text>
  <text x="660.500" y="960">3</text>
  <text x="1650.500" y="960">1</text>
 </g>
 <!-- collapse handle -->
 <path d="M568 554.900 L585 561 Q588.400 562.500 588.400 566 V621 Q588.400 624.500 585 626 L568 632.300 Z" fill="#555"/>
 <path d="M580.500 590.500 L576 594.700 L580.500 599" stroke="#bdbdbd" stroke-width="1.200" fill="none"/>
 <!-- axis gizmo -->
 <path d="M629 902.500 L608 900" stroke="#f00000" stroke-width="5.500"/><path d="M594.500 899.300 L609.500 893.500 L608 906.500 Z" fill="#f00000"/>
 <path d="M631 900 V889" stroke="#0000f0" stroke-width="5"/><path d="M625 891 Q631 873 637 891 Q631 897 625 891 Z" fill="#0000f0"/>
 <path d="M630.500 906 L628.500 920" stroke="#00e000" stroke-width="5"/><path d="M620.500 918 L634.500 920 L626.500 933 Z" fill="#00e000"/>
 <path d="M627 897 Q631 900 635 897 V909 Q631 906 627 909 Z" fill="#c8c8c8"/>
 <g font-family="'Liberation Sans',sans-serif" font-size="18px">
  <text x="581" y="906" fill="#f00000">X</text><text x="626" y="883" fill="#0000f0" font-size="18.500px">Z</text><text x="619.300" y="946" fill="#00e000">Y</text>
 </g>
 <!-- IME floating bar -->
 <rect x="1750" y="828" width="62.300" height="27.300" fill="#fdfdfd"/>
 <path d="M1753.500 830 V853" stroke="#c8c8c8" stroke-width="1" stroke-dasharray="1.500 2" fill="none"/>
 <path d="M1765.500 834.500 L1783 832 L1785 849.500 L1767.500 852 Z" fill="#f4501e"/>
 <path d="M1780.500 837 Q1774 834.500 1770.500 838.500 Q1769 842 1775 842.500 Q1781 843.500 1779.500 846.500 Q1776 849.500 1770.500 846.800" stroke="#fff" stroke-width="2.400" fill="none"/>
 <rect x="1799" y="832.500" width="7" height="4.500" rx="2" fill="none" stroke="#555" stroke-width="1.200"/><path d="M1799 845.500 V849.500 H1806 V845.500" stroke="#555" stroke-width="1.400" fill="none"/>
 <!-- right view toolbar -->
 <path d="M1965 221 H1929 Q1925 221 1925 225 V523 Q1925 527 1929 527 H1965 Z" fill="#fff"/>
 <g class="ic" stroke-width="1.200">
  <circle cx="1944" cy="249.500" r="11.500"/>
  <rect x="1932.300" y="274.300" width="22.800" height="22.500" rx="2"/>
  <path d="M1932.500 314.500 H1950.500 V332 Q1950.500 333 1949.500 333 H1933.500 Q1932.500 333 1932.500 332 Z"/><path d="M1950.500 314.500 L1955.500 310 V328 L1950.500 332.500"/>
  <path d="M1932.500 412 V407.500 H1937.500 M1950.500 407.500 H1955.500 V412 M1955.500 425 V429.500 H1950.500 M1937.500 429.500 H1932.500 V425" stroke-width="1.300"/>
  <rect x="1932.500" y="443" width="23.500" height="24" rx="3.500" stroke-dasharray="3 1.800"/>
  <path d="M1931.500 476.700 H1959" stroke="#8a8f9a"/>
  <path d="M1955.500 498 V487.500 Q1955.500 485.500 1953.500 485.500 H1934.500 Q1932.500 485.500 1932.500 487.500 V507 Q1932.500 509 1934.500 509 H1944" stroke-width="1.300"/>
  <path d="M1937 492 H1939.500 M1942 492 H1951.500 M1937 496.800 H1939.500 M1942 496.800 H1948 M1937 501.800 H1939.500" stroke-width="1.200"/>
 </g>
 <g class="ib" stroke-width="1.200">
  <ellipse cx="1944" cy="249" rx="14" ry="6.300" transform="rotate(-33 1944 249)"/>
  <path d="M1932.500 314.500 L1937.500 310 H1955.500 L1950.500 314.500 Z" fill="#d6e6fc"/>
  <path d="M1932.500 363.500 H1950.500 V381 Q1950.500 382 1949.500 382 H1933.500 Q1932.500 382 1932.500 381 Z" fill="#cfe0fb"/><path d="M1950.500 363.500 L1955.500 359 V377 L1950.500 381.500 Z" fill="#cfe0fb"/><path d="M1932.500 363.500 L1937.500 359 H1955.500 L1950.500 363.500 Z" fill="#dbe8fd"/>
  <path d="M1944.300 448.500 L1951 452 V459 L1944.300 463 L1937.600 459 V452 Z M1937.600 452 L1944.300 455.800 L1951 452 M1944.300 455.800 V463"/>
  <path d="M1946.500 505.500 Q1951.500 501 1956.500 505.500 Q1951.500 510 1946.500 505.500 Z"/><circle cx="1951.500" cy="505.500" r="1.300" fill="#2b7bea"/>
 </g>
 <text x="1934.300" y="293.800" font-family="'Liberation Sans',sans-serif" font-size="8.500px" font-weight="bold" fill="#2b7bea">2D</text>
 <path d="M1940 343.800 h8.600 l-4.300 4.800 z M1940 392.300 h8.600 l-4.300 4.800 z" fill="#4a5160"/>
</svg>
<!-- red annotation on property panel -->
<div class="a" style="left:236px;top:851.500px;width:342px;height:85.500px;border:4.500px solid #f75252;border-radius:3px"></div>
<!-- ===== dialog: 查看钢筋量 ===== -->
<div class="dlg"></div>
<div class="t" style="left:807px;top:106.500px;font-size:17.500px;color:#333">查看钢筋量</div>
<svg style="left:1625px;top:104px" width="96" height="22" viewBox="1625 104 96 22"><g fill="none" stroke="#444" stroke-width="1.200"><path d="M1632 119 H1644.500"/><rect x="1667.300" y="108.800" width="12" height="12"/><path d="M1702 109 L1714.500 121.500 M1714.500 109 L1702 121.500"/></g></svg>
<div class="a" style="left:807px;top:141px;width:910px;height:35px;border:1px solid #c6ced6;background:#fff"></div>
<svg style="left:814px;top:148px" width="22" height="22" viewBox="814 148 22 22"><path d="M833 156 V154.500 L828 150.500 H819 Q816.500 150.500 816.500 153 V165 Q816.500 167.500 819 167.500 H823" fill="none" stroke="#444" stroke-width="1.300"/><path d="M826.500 167 Q826.500 161.500 831.500 161.500 V158.500 L835 162.800 L831.500 167 V164 Q828 164 826.500 167 Z" fill="#2b6ee8"/></svg>
<div class="t" style="left:841px;top:150.500px;font-size:15px;color:#333">导出到Excel</div>
<div class="a" style="left:931px;top:149px;width:16.500px;height:16.500px;border:1px solid #555;border-radius:3px;background:#fff"></div>
<div class="t" style="left:952px;top:148.500px;font-size:15px;color:#333">显示施工段归类</div>
<!-- grid -->
<div class="a" style="left:807px;top:184px;width:9px;height:176px;background:#f0f0f0;border-left:1px solid #dcdcdc"></div>
<div class="a" style="left:807px;top:206px;width:9px;height:1px;background:#d0d0d0"></div>
<div class="a" style="left:807px;top:253px;width:9px;height:1px;background:#d0d0d0"></div>
<div class="a" style="left:807px;top:295px;width:9px;height:1px;background:#d0d0d0"></div>
<div class="a" style="left:807px;top:336px;width:9px;height:1px;background:#d0d0d0"></div>
<div class="t" style="left:808px;top:265px;font-size:13px;color:#3a62a8">1</div>
<div class="t" style="left:808px;top:306px;font-size:13px;color:#3a62a8">2</div>
<div class="t" style="left:808px;top:338px;font-size:13px;color:#3a62a8">3</div>
<div class="hl" style="left:815px;top:183.500px;width:456px;height:1.500px"></div>
<div class="hl" style="left:815px;top:206px;width:456px"></div>
<div class="hl" style="left:1092px;top:230px;width:179px"></div>
<div class="hl" style="left:815px;top:253.500px;width:456px"></div>
<div class="hl" style="left:908px;top:295px;width:363px"></div>
<div class="hl" style="left:908px;top:336px;width:363px"></div>
<div class="hl" style="left:815px;top:359.500px;width:456px"></div>
<div class="vl" style="left:815px;top:184px;height:176px"></div>
<div class="vl" style="left:908px;top:206px;height:154px"></div>
<div class="vl" style="left:998px;top:206px;height:154px"></div>
<div class="vl" style="left:1092px;top:206px;height:154px"></div>
<div class="vl" style="left:1168px;top:230px;height:130px"></div>
<div class="vl" style="left:1270px;top:184px;height:176px"></div>
<div class="tbl" style="left:818px;top:184px">钢筋总重量（Kg）：0</div>
<div class="tbl c" style="left:816px;width:92px;top:218.500px">楼层名称</div>
<div class="tbl c" style="left:909px;width:89px;top:218.500px">构件名称</div>
<div class="tbl c" style="left:999px;width:93px;top:210px">钢筋总重量</div>
<div class="tbl c" style="left:999px;width:93px;top:229px;font-size:13px">（kg）</div>
<div class="tbl c" style="left:1169px;width:101px;top:232px">合计</div>
<div class="tbl c" style="left:816px;width:92px;top:296px">首层</div>
<div class="tbl" style="left:912px;top:255px;font-size:14.500px;letter-spacing:.1px">D01-1、2、4</div>
<div class="tbl" style="left:912px;top:272px;font-size:14.500px;letter-spacing:.85px">-200[42043]</div>
<div class="tbl" style="left:912px;top:296.500px;font-size:14.500px;letter-spacing:.1px">D01-1、2、4</div>
<div class="tbl" style="left:912px;top:313.500px;font-size:14.500px;letter-spacing:.85px">-200[42047]</div>
<div class="tbl" style="left:912px;top:338px">合计：</div>
<!-- red annotation -->
<div class="a" style="left:806.600px;top:231.600px;width:515.200px;height:168.600px;border:4.500px solid #f75252;border-radius:3px"></div>
<!-- resize grip -->
<svg style="left:1715.500px;top:613px" width="12" height="12"><g fill="#4a5160"><rect x="9" y="1" width="2" height="2"/><rect x="9" y="5" width="2" height="2"/><rect x="5" y="5" width="2" height="2"/><rect x="9" y="9" width="2" height="2"/><rect x="5" y="9" width="2" height="2"/><rect x="1" y="9" width="2" height="2"/></g></svg>

<!-- ===== status bar ===== -->
<div class="a" style="left:46px;top:967px;width:1919px;height:38px;background:#fff"></div>
<div class="a" style="left:46px;top:1005px;width:1919px;height:1px;background:#cfcfcf"></div>
<div class="st" style="left:48.500px">层高：</div><div class="st" style="left:99px">3.15</div>
<div class="st" style="left:161px">标高：</div><div class="st" style="left:212px">-0.12~3.03</div>
<div class="st" style="left:336px">选中图元：2(6)</div>
<div class="st" style="left:473.500px">隐藏图元：0</div>
<div class="sb" style="left:611.500px;width:30px"></div>
<div class="sb" style="left:646.500px;width:44px;background:#dae7fb;border-color:#4a8cec"></div>
<div class="sb" style="left:699px;width:30.500px"></div>
<div class="sb" style="left:737.500px;width:44px"></div>
<div class="sb" style="left:786.500px;width:44px"></div>
<div class="sb" style="left:835.500px;width:30px"></div>
<div class="sb" style="left:870.500px;width:30px"></div>
<svg style="left:605px;top:967px" width="340" height="38" viewBox="605 967 340 38">
 <g class="ic" stroke-width="1.200" stroke="#5a6070">
  <path d="M618.500 977 V992 H633"/><path d="M618.500 986.500 H624 V992" stroke-width="1"/>
  <rect x="653.500" y="977.500" width="16" height="15.500" rx="4"/><circle cx="653.500" cy="977.500" r="1.800" fill="#fff" stroke="#2b7bea"/>
  <path d="M704.500 976 L723.500 995 M723.500 976 L704.500 995" stroke="#777"/>
  <path d="M744 992.500 H761 M744 992.500 L756.500 978.500"/><circle cx="750" cy="986" r="1.500" fill="#fff"/>
  <path d="M791.500 979 H799 M795.200 975.300 V982.700"/>
  <rect x="842" y="978" width="12" height="11" rx="1.500" fill="#4a5160"/><path d="M840.500 981 V991 Q840.500 992.500 842 992.500 H851" stroke-width="1.200"/><path d="M854 980 Q856 980 856 982 V986"/>
  <path d="M877 993 L880 980.500 L892.500 976.500"/><circle cx="877" cy="993" r="1.400" fill="#fff"/><circle cx="880" cy="980.500" r="1.400" fill="#fff"/><circle cx="892.500" cy="976.500" r="1.400" fill="#fff"/>
  <path d="M921.500 994 L939.500 976 M921.500 986.500 V994 H929 M932 976 H939.500 V983.500" stroke-width="1.300"/>
 </g>
 <rect x="798" y="987" width="12.500" height="5" rx="1" fill="#4a5160"/>
 <path d="M853 985 l5 3.500 l-5 3.500 z M888 985 l5 3.500 l-5 3.500 z" fill="#4a5160"/>
 <path d="M679.500 983.500 l3.500 4 l3.500 -4 z M770.500 983.500 l3.500 4 l3.500 -4 z M819.500 983.500 l3.500 4 l3.500 -4 z" fill="#444"/>
</svg>
<div class="a" style="left:1556px;top:976.500px;width:17px;height:17px;border-radius:50%;background:#f78c20;color:#fff;font-size:13px;font-weight:bold;line-height:17px;text-align:center">!</div>
<div class="st" style="left:1581.500px">合法性检查存在问题，请点击查看</div>
<div class="a" style="left:1822.500px;top:976.500px;width:17px;height:17px;border-radius:50%;background:#6cc21c"></div>
<svg style="left:1822.500px;top:976.500px" width="17" height="17"><path d="M4.500 8.800 L7.500 11.800 L12.800 5.800" stroke="#fff" stroke-width="2" fill="none" stroke-linecap="round" stroke-linejoin="round"/></svg>
<div class="st" style="left:1847.500px">实时计算已完成</div>

<!-- ===== taskbar ===== -->
<div class="a" style="left:46px;top:1006px;width:1919px;height:28px;background:linear-gradient(90deg,#eeeaea 0,#f0ecee 12%,#f4e6ec 33%,#ebe4f2 48%,#e2e8f6 62%,#e6eef4 70%,#f3f4dc 74%,#eef3e4 79%,#e4edf4 86%,#e6ecf6 100%)"></div>
<div class="a" style="left:0;top:1014px;width:46px;height:20px;background:#f1f1f1;border-top:1px solid #dcdcdc"></div>
<div class="t" style="left:1px;top:1024px;font-size:12px;color:#777">4:47</div>
<div class="a" style="left:72px;top:1022px;width:24px;height:24px;border-radius:50%;background:#f8b400"></div>
<div class="a" style="left:84.500px;top:1012.500px;width:20px;height:20px;border-radius:50%;background:#c42b1c;color:#fff;font-size:14px;line-height:20px;text-align:center">5</div>
<div class="t" style="left:110.500px;top:1014.500px;font-size:13.500px;color:#222">10°C</div>
<div class="a" style="left:631px;top:1021px;width:14px;height:13px;background:linear-gradient(135deg,#4cc2ff,#1a9bf0)"></div>
<div class="a" style="left:646.500px;top:1021px;width:14px;height:13px;background:linear-gradient(135deg,#2aa8f6,#0a7cd8)"></div>
<div class="a" style="left:678px;top:1016px;width:272px;height:30px;border-radius:15px;background:#fbfbfd;border:1px solid #e2e2e6"></div>
<svg style="left:690px;top:1024px" width="18" height="12"><circle cx="9" cy="9.500" r="7" fill="none" stroke="#222" stroke-width="1.600"/></svg>
<div class="a" style="left:720px;top:1022px;width:40px;height:12px;overflow:hidden"><div class="t" style="left:3px;top:1px;font-size:15.500px;color:#444">搜索</div></div>
<div class="a" style="left:898px;top:1024px;width:40px;height:10px;overflow:hidden"><div class="a" style="left:0;top:3px;width:14px;height:12px;background:#222;border-radius:5px 5px 0 0"></div><div class="a" style="left:14px;top:1px;width:12px;height:12px;background:#bcd8f2;border-radius:4px"></div><div class="a" style="left:22px;top:2px;width:4px;height:10px;background:#e8864a"></div><div class="a" style="left:28px;top:4px;width:9px;height:9px;background:#1a7be8;border-radius:50%"></div></div>
<div class="a" style="left:967px;top:1027px;width:14px;height:7px;background:#3a3a3a"></div><div class="a" style="left:975px;top:1024px;width:20px;height:10px;background:#e8e8ec;border-radius:2px 2px 0 0"></div>
<div class="a" style="left:1022px;top:1020px;width:30px;height:30px;border-radius:50%;background:conic-gradient(from 200deg,#35c1f1,#1b9de2 30%,#0c59a4 55%,#2ab87c 80%,#35c1f1)"></div>
<div class="a" style="left:1077px;top:1024px;width:30px;height:10px;background:#f4f6fa;border:1px solid #555;border-bottom:0"></div><div class="a" style="left:1084px;top:1028px;width:16px;height:6px;background:#0a78d4"></div>
<div class="a" style="left:1132px;top:1020px;width:30px;height:20px;border-radius:8px;background:#2dc100"></div><div class="a" style="left:1139px;top:1027px;width:12px;height:9px;border-radius:50%;background:#fff"></div>
<div class="a" style="left:1186px;top:1022px;width:14px;height:6px;border-radius:2px 2px 0 0;background:#e8a100"></div><div class="a" style="left:1186px;top:1025px;width:31px;height:9px;background:#ffc930;border-radius:2px 2px 0 0"></div>
<div class="a" style="left:1249px;top:1024px;width:12px;height:10px;border-left:2px solid #1a56c8;border-top:2px solid #1a56c8"></div><div class="a" style="left:1259px;top:1021px;width:12px;height:10px;background:#f6a220"></div><div class="a" style="left:1264px;top:1021px;width:7px;height:5px;background:#f0604a"></div>
<div class="a" style="left:1297px;top:1011px;width:40px;height:30px;border-radius:5px;background:rgba(255,255,255,.75);box-shadow:0 0 0 1px rgba(0,0,0,.04)"></div>
<div class="a" style="left:1304px;top:1020px;width:25px;height:20px;border-radius:6px;background:linear-gradient(135deg,#3a9bf6,#0a64d8)"></div><div class="a" style="left:1310px;top:1027px;width:13px;height:4px;background:#fff;transform:skewX(-30deg) rotate(-14deg)"></div>
<div class="a" style="left:1355px;top:1020px;width:24px;height:14px;border:2px solid #5a6a7a;border-bottom:0;background:#dfe6ee;border-radius:2px 2px 0 0"></div><div class="a" style="left:1357px;top:1022px;width:20px;height:6px;background:#39b6ee"></div>
<svg style="left:1690px;top:1018px" width="170" height="16" viewBox="1690 1018 170 16"><g fill="none" stroke="#222" stroke-width="1.400"><path d="M1696.500 1034 L1701.500 1029.500 L1706.500 1034"/><path d="M1733 1034 A9 9 0 0 1 1748 1024.500"/><path d="M1748.500 1019.500 V1025.500 H1742.500"/><path d="M1772 1034 A9.500 9.500 0 0 1 1791 1034 M1776.500 1034 A5 5 0 0 1 1786.500 1034"/><path d="M1803 1034 V1030 H1806 L1811 1025.500 V1034 M1814 1029 L1819 1034 M1819 1029 L1814 1034"/><path d="M1834 1034 V1028 L1838 1025.500 H1846 V1034" stroke-width="2.200"/></g></svg>
<div class="t" style="left:1905px;top:1014.500px;font-size:14.500px;color:#222">14:47</div>
</body>
</html>
